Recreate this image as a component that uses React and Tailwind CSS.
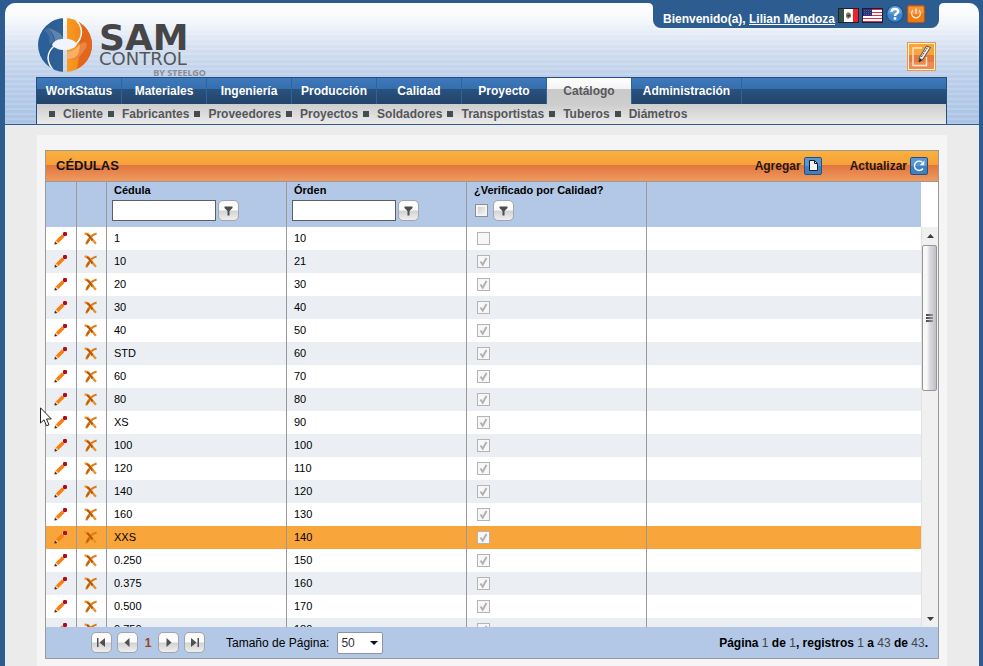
import React from "react";

const TABS = ["WorkStatus", "Materiales", "Ingeniería", "Producción", "Calidad", "Proyecto", "Catálogo", "Administración"];
const SUBMENU = ["Cliente", "Fabricantes", "Proveedores", "Proyectos", "Soldadores", "Transportistas", "Tuberos", "Diámetros"];
const ROWS = [
  ["1", "10"], ["10", "21"], ["20", "30"], ["30", "40"], ["40", "50"], ["STD", "60"],
  ["60", "70"], ["80", "80"], ["XS", "90"], ["100", "100"], ["120", "110"], ["140", "120"],
  ["160", "130"], ["XXS", "140"], ["0.250", "150"], ["0.375", "160"], ["0.500", "170"], ["0.750", "180"],
];
const SELECTED = "XXS";

function Logo() {
  return (
    <svg width="172" height="62" viewBox="0 0 172 62" role="img" aria-label="SAM Control by Steelgo" className="block">
      <defs>
        <clipPath id="disc"><circle cx="27" cy="27" r="27" /></clipPath>
        <linearGradient id="blueHalf" x1="0" x2="1"><stop offset="0" stopColor="#2a5f98" /><stop offset="1" stopColor="#2f5f95" /></linearGradient>
        <linearGradient id="orangeHalf" x1="0" x2="1"><stop offset="0" stopColor="#f99c1c" /><stop offset="0.5" stopColor="#f28a20" /><stop offset="1" stopColor="#d95a18" /></linearGradient>
      </defs>
      <g clipPath="url(#disc)">
        <rect width="25" height="54" fill="url(#blueHalf)" />
        <rect x="29" width="25" height="54" fill="url(#orangeHalf)" />
        <path d="M38 0C46 8 46 16 41 24C41 32 42 42 38 54H54V0Z" fill="#e2661c" />
        <path d="M9 10C18 12 24 16 25 20L17 24C17 18 14 13 9 10Z" fill="#5f84ac" />
        <path d="M9 10C13 13 16 18 16 24L11 26C12 20 11 15 6 13Z" fill="#44719f" />
        <path d="M29 34C35 33 39 30 42 26C43 36 38 42 29 41Z" fill="#f9b066" />
        <path d="M42 26C48 22 50 25 48 30L42 38C38 43 33 42 31 41C39 41 42 35 42 26Z" fill="#ee8443" />
        <path d="M36 0C45 8 46 18 38 26" fill="none" stroke="#ffffff" strokeWidth="1.5" />
        <path d="M16 28C7 36 9 46 17 54" fill="none" stroke="#ffffff" strokeWidth="1.5" />
        <path d="M14 27C17 19 35 19 39 26C36 34 19 34 14 27Z" fill="#f0f5fb" />
      </g>
      <text x="61" y="32" fill="#464548" fontSize="36" fontWeight="700" fontFamily="DejaVu Sans, sans-serif">SAM</text>
      <text x="61" y="47" fill="#55565a" fontSize="18" fontFamily="DejaVu Sans, sans-serif">CONTROL</text>
      <text x="168" y="58" textAnchor="end" fill="#8a8d93" fontSize="9" fontWeight="700" fontFamily="Noto Sans, sans-serif">BY STEELGO</text>
    </svg>
  );
}

const MexicoFlag = () => (
  <svg width="21" height="15" viewBox="0 0 21 15" className="block">
    <rect width="21" height="15" fill="#1c2420" />
    <rect x="1" y="1" width="5" height="13" fill="#34504a" />
    <rect x="6" y="1" width="9" height="13" fill="#ffffff" />
    <rect x="15" y="1" width="5" height="13" fill="#f3202c" />
    <path d="M8 6L10 4L13 6V9L10 11L8 9Z" fill="#8b7a62" />
    <path d="M9 7H11V5L12 8L10 9Z" fill="#33302a" />
  </svg>
);

const UsFlag = () => (
  <svg width="21" height="15" viewBox="0 0 21 15" className="block">
    <rect width="21" height="15" fill="#1b1c3a" />
    <rect x="1" y="1" width="19" height="13" fill="#ffffff" />
    {[1, 4, 7, 10, 13].map((y) => <rect key={y} x="1" y={y} width="19" height="1" fill="#e0303c" />)}
    <rect x="1" y="1" width="9" height="7" fill="#2b2f78" />
    {[2, 4, 6].map((y) => <path key={y} d={`M2 ${y}.5H9`} stroke="#5a5f9d" strokeWidth="1" strokeDasharray="1 1" />)}
  </svg>
);

const HelpIcon = () => (
  <svg width="18" height="18" viewBox="0 0 18 18" className="block">
    <circle cx="9" cy="9" r="9" fill="#1f4f86" />
    <circle cx="9" cy="9" r="7.8" fill="#3f84c8" />
    <path d="M2 8A7 7 0 0 1 16 8Q9 11 2 8Z" fill="#5f9dd8" />
    <path d="M5.7 6.8C5.7 3.2 12.2 3.2 12.2 6.3C12.2 8.6 9 8.3 9 11" fill="none" stroke="#ffffff" strokeWidth="2.5" />
    <rect x="7.7" y="12.2" width="2.6" height="2.5" fill="#ffffff" />
  </svg>
);

const PowerIcon = () => (
  <svg width="18" height="18" viewBox="0 0 18 18" className="block">
    <rect x="0.5" y="0.5" width="17" height="17" rx="2" fill="#f07a12" stroke="#b8560c" />
    <path d="M1.5 2H16.5V8Q9 11 1.5 8Z" fill="#f7923a" />
    <path d="M6 5.2A4.4 4.4 0 1 0 12 5.2" fill="none" stroke="#ffe9d0" strokeWidth="1.2" />
    <path d="M9 3.5V9" stroke="#ffffff" strokeWidth="1.2" />
  </svg>
);

const NotesIcon = () => (
  <svg width="29" height="29" viewBox="0 0 29 29" className="block">
    <rect width="29" height="29" fill="#f0953c" />
    <rect x="1.5" y="1.5" width="26" height="26" fill="#f7a43a" stroke="#fff3e0" />
    <rect x="2" y="13" width="25" height="14" fill="#e27b43" />
    <rect x="2" y="20" width="25" height="7" fill="#ea8d50" />
    <path d="M15 6H6V23.5H19.5V15" fill="none" stroke="#fbe6cf" strokeWidth="1.4" />
    <path d="M12 20L12.5 15.5L19.5 4L23.5 5.5L15.5 17.8Z" fill="#e8e8e8" stroke="#333333" strokeWidth="0.8" />
    <path d="M12 20L12.8 16L15.2 18Z" fill="#222222" />
    <path d="M14.3 15L20.8 5" stroke="#555555" strokeWidth="1" strokeDasharray="2 1" />
  </svg>
);

const NewIcon = () => (
  <svg width="18" height="18" viewBox="0 0 18 18" className="block">
    <rect x="0.5" y="0.5" width="17" height="17" rx="1.5" fill="#4080bf" stroke="#234f82" />
    <rect x="1" y="1" width="16" height="8" fill="#5a96d0" />
    <path d="M5.5 3.5H10.5L13.5 6.5V13.5H5.5Z" fill="#f2f5f8" stroke="#15202c" />
    <path d="M10.5 3.5V6.5H13.5" fill="none" stroke="#15202c" />
  </svg>
);

const RefreshIcon = () => (
  <svg width="18" height="18" viewBox="0 0 18 18" className="block">
    <rect x="0.5" y="0.5" width="17" height="17" rx="1.5" fill="#4080bf" stroke="#234f82" />
    <rect x="1" y="1" width="16" height="8" fill="#5a96d0" />
    <path d="M12.2 5.2A4.7 4.7 0 1 0 13 11.5" fill="none" stroke="#ffffff" strokeWidth="1.3" />
    <path d="M14.3 3.6V8.2H9.8Z" fill="#ffffff" />
  </svg>
);

const PencilIcon = () => (
  <svg width="13" height="13" viewBox="0 0 13 13" className="block">
    <path d="M2.6 10.2L9.4 3.4" stroke="#fb7d0c" strokeWidth="3.6" />
    <path d="M0.4 12.6L1 9.6L3.4 12Z" fill="#2b2622" />
    <path d="M1.2 9.6L2.2 8.6L4.4 10.8L3.4 11.8Z" fill="#f9c58c" />
    <path d="M8.4 2L11 4.6" stroke="#dcd6e6" strokeWidth="1.3" />
    <rect x="9" y="0" width="4" height="4" rx="1.2" fill="#b00c12" />
  </svg>
);

const DeleteIcon = () => (
  <svg width="13" height="13" viewBox="0 0 13 13" className="block">
    <path d="M12.6 1.4C8.6 2.4 4.2 6.2 2.2 12.4" fill="none" stroke="#e07a14" strokeWidth="2.1" />
    <path d="M0.6 1.8C3.4 1.2 5.2 3 7 5.6C8.6 8 10 9.8 12 11.8" fill="none" stroke="#ee8f26" strokeWidth="2.3" />
    <path d="M3 2.2C5 3.2 6.4 5.8 8.4 8.4" fill="none" stroke="#b85404" strokeWidth="2" />
    <path d="M5.4 7.4L3 11" stroke="#c25f08" strokeWidth="2" />
  </svg>
);

const Check = () => (
  <svg width="13" height="13" viewBox="0 0 13 13" className="pointer-events-none absolute left-0 top-0">
    <path d="M3.5 6.5L5.7 9.8L9.5 3" fill="none" stroke="#b0b0b0" strokeWidth="1.9" />
  </svg>
);

const ICON_BUTTON =
  "flex size-[21px] items-center justify-center rounded-[5px] border border-[#a2a6ac] bg-linear-to-b from-[#fbfbfb] from-45% via-[#d4d4d4] via-55% to-[#efefef]";

function FilterButton({ label }) {
  return (
    <button type="button" aria-label={label} className={ICON_BUTTON}>
      <svg width="9" height="10" viewBox="0 0 9 10">
        <path d="M0.5 0.5H8.5V2L5.5 5V9.5H3.5V5L0.5 2Z" fill="#4c4c4c" />
      </svg>
    </button>
  );
}

function PagerButton({ label, d }) {
  return (
    <button type="button" aria-label={label} className={ICON_BUTTON}>
      <svg width="9" height="9" viewBox="0 0 9 9"><path d={d} fill="#505050" /></svg>
    </button>
  );
}

function TextFilter({ label }) {
  return (
    <div className="flex gap-[2px] pl-[5px]">
      <input type="text" aria-label={label} className="h-[21px] w-[104px] border border-[#5c5f63] bg-white px-1 text-[11px] outline-none" />
      <FilterButton label={`Filtrar ${label}`} />
    </div>
  );
}

function HeaderCell({ title, children }) {
  return (
    <th scope="col" className="h-[45px] border-r border-[#999999] bg-[#b2c8e6] p-0 text-left align-top font-bold">
      <div className="h-[18px] pl-[7px] leading-[17px] whitespace-nowrap">{title}</div>
      {children}
    </th>
  );
}

function ScrollBar() {
  return (
    <div className="flex min-h-0 flex-1 flex-col border-l border-[#e2e2e2] bg-[#f0f0f0]">
      <button type="button" aria-label="Subir" className="flex h-[18px] items-center justify-center">
        <svg width="7" height="4" viewBox="0 0 7 4"><path d="M3.5 0L7 4H0Z" fill="#3c3c3c" /></svg>
      </button>
      <div className="mr-px flex h-[146px] flex-col items-center justify-center gap-px rounded-[2px] border border-[#979797] bg-linear-to-r from-[#f8f8f8] from-30% via-[#dcdce0] via-50% to-[#bfbfc8]">
        <i className="h-[2px] w-[7px] bg-linear-to-r from-[#444444] to-[#999999]" />
        <i className="h-[2px] w-[7px] bg-linear-to-r from-[#444444] to-[#999999]" />
        <i className="h-[2px] w-[7px] bg-linear-to-r from-[#444444] to-[#999999]" />
      </div>
      <button type="button" aria-label="Bajar" className="mt-auto flex h-[17px] items-center justify-center">
        <svg width="7" height="4" viewBox="0 0 7 4"><path d="M3.5 4L7 0H0Z" fill="#3c3c3c" /></svg>
      </button>
    </div>
  );
}

function Grid() {
  return (
    <div className="flex h-[445px] overflow-hidden">
      <div className="min-w-0 flex-1 overflow-hidden">
        <table className="w-full table-fixed border-separate border-spacing-0 text-[11px] text-black">
          <colgroup>
            <col className="w-[31px]" />
            <col className="w-[30px]" />
            <col className="w-[180px]" />
            <col className="w-[180px]" />
            <col className="w-[180px]" />
            <col />
          </colgroup>
          <thead>
            <tr>
              <td className="border-r border-[#999999] bg-[#b2c8e6]" />
              <td className="border-r border-[#999999] bg-[#b2c8e6]" />
              <HeaderCell title="Cédula"><TextFilter label="Cédula" /></HeaderCell>
              <HeaderCell title="Órden"><TextFilter label="Órden" /></HeaderCell>
              <HeaderCell title="¿Verificado por Calidad?">
                <div className="flex items-center gap-[5px] pl-2">
                  <input type="checkbox" aria-label="Verificado por Calidad" className="size-[13px] appearance-none border border-[#8e8f8f] bg-linear-to-br from-[#c4c8cc] to-[#fafafa] shadow-[inset_0_0_0_2px_#f4f4f4]" />
                  <FilterButton label="Filtrar Verificado por Calidad" />
                </div>
              </HeaderCell>
              <td className="bg-[#b2c8e6]" />
            </tr>
          </thead>
          <tbody>
            {ROWS.map(([name, order], i) => (
              <tr key={name} className={name === SELECTED ? "bg-[#f8a53c]" : i % 2 ? "bg-[#ebeff4]" : "bg-white"}>
                <td className="h-[23px] border-r border-[#999999] p-0">
                  <button type="button" aria-label={`Editar ${name}`} className="ml-2 block"><PencilIcon /></button>
                </td>
                <td className="border-r border-[#999999] p-0">
                  <button type="button" aria-label={`Borrar ${name}`} className="ml-[7px] block"><DeleteIcon /></button>
                </td>
                <td className="border-r border-[#999999] p-0 pb-px pl-[7px] leading-4">{name}</td>
                <td className="border-r border-[#999999] p-0 pb-px pl-[7px] leading-4">{order}</td>
                <td className="border-r border-[#999999] p-0 pl-[10px]">
                  <span className="relative block size-[13px]">
                    <input type="checkbox" disabled checked={i > 0} readOnly aria-label={`Verificado ${name}`} className="block size-[13px] appearance-none border border-[#b4b4b4] bg-[#f7f7f7]" />
                    {i > 0 && <Check />}
                  </span>
                </td>
                <td className="p-0" />
              </tr>
            ))}
          </tbody>
        </table>
      </div>
      <div className="flex w-[17px] flex-col bg-white pt-[45px]"><ScrollBar /></div>
    </div>
  );
}

export default function App() {
  return (
    <div className="relative flex min-h-screen flex-col bg-[#2c5c90] pt-[3px] pr-1 pl-[5px] font-['Liberation_Sans',Arial,sans-serif]">
      <header className="rounded-t-[10px] border-b border-[#2c5c90] bg-[repeating-linear-gradient(180deg,rgba(255,255,255,0.14)_0px,rgba(255,255,255,0.14)_2px,transparent_2px,transparent_5px),linear-gradient(180deg,#ffffff_0%,#f4f7fb_15%,#d3dff0_38%,#bccfea_60%,#a9c3e5_100%)]">
        <div className="flex h-[74px] justify-between pl-[33px]">
          <a href="#inicio" className="pt-[15px]"><Logo /></a>
          <div className="flex flex-col items-end pr-[35px]">
            <div className="flex">
              <svg width="5" height="5" viewBox="0 0 5 5"><path d="M0 0Q5 0 5 5V0Z" fill="#2c5c90" /></svg>
              <div className="flex h-[25px] items-start rounded-b-[8px] bg-[#2c5c90] pr-[14px] pl-[10px] text-[12px] font-bold text-white">
                <span className="pt-2 leading-4 whitespace-nowrap">Bienvenido(a), <a href="#perfil" className="underline">Lilian Mendoza</a></span>
                <button type="button" aria-label="Español" className="mt-[5px] ml-[3px]"><MexicoFlag /></button>
                <button type="button" aria-label="English" className="mt-[5px] ml-[3px]"><UsFlag /></button>
                <button type="button" aria-label="Ayuda" className="mt-[2px] ml-[3px]"><HelpIcon /></button>
                <button type="button" aria-label="Salir" className="mt-[2px] ml-[3px]"><PowerIcon /></button>
              </div>
              <svg width="5" height="5" viewBox="0 0 5 5"><path d="M5 0Q0 0 0 5V0Z" fill="#2c5c90" /></svg>
            </div>
            <button type="button" aria-label="Notas" className="mt-[14px] mr-2"><NotesIcon /></button>
          </div>
        </div>
        <div className="mr-8 ml-[31px] border-x border-t border-[#24507f]">
          <nav className="h-[26px]">
            <ul className="flex h-full w-full bg-[linear-gradient(180deg,#3d79bc_0px,#366eac_11px,#28527f_11px,#23446a_26px)]">
              {TABS.map((tab) => (
                <li
                  key={tab}
                  className={
                    tab === "Catálogo"
                      ? "w-[85px] border-r border-[#2f639e] bg-[linear-gradient(180deg,#ffffff_0px,#f4f4f4_11px,#cacaca_11px,#cdcdcd_26px)] text-[#58595b]"
                      : tab === "Administración"
                        ? "w-[110px] border-r border-[#2f639e] text-white"
                        : "w-[85px] border-r border-[#2f639e] text-white"
                  }
                >
                  <a href={`#${tab}`} className="flex h-full items-center justify-center text-[12px] font-bold">{tab}</a>
                </li>
              ))}
            </ul>
          </nav>
          <nav className="bg-linear-to-b from-[#cdcdcd] to-[#ebebeb]">
            <ul className="flex h-5 items-center gap-[5px] pl-3">
              {SUBMENU.map((item) => (
                <li key={item} className="flex items-center gap-2">
                  <i className="size-[6px] bg-[#454c4f]" />
                  <a href={`#${item}`} className="text-[12px] leading-4 font-bold text-[#54565a]">{item}</a>
                </li>
              ))}
            </ul>
          </nav>
        </div>
      </header>
      <main className="flex flex-1 flex-col bg-[#ebebeb] pt-[10px] pr-8 pl-8">
        <div className="flex-1 bg-[#f5f5f5] px-2 pt-[15px] pb-[7px]">
          <section className="border border-[#999999] bg-white">
            <div className="flex h-[31px] items-center border-b border-[#999999] bg-[linear-gradient(180deg,#fbb03b_0px,#f5a03c_14px,#e0743e_14px,#f09c5e_30px)] pr-[10px] pl-[10px]">
              <h1 className="flex-1 text-[13px] font-bold text-[#15110c]">CÉDULAS</h1>
              <div className="flex gap-7 text-[12px] font-bold text-[#2a1608]">
                <a href="#agregar" className="flex items-center gap-[3px]">Agregar<NewIcon /></a>
                <a href="#actualizar" className="flex items-center gap-[3px]">Actualizar<RefreshIcon /></a>
              </div>
            </div>
            <Grid />
            <footer className="flex h-[31px] items-center bg-[#b2c8e6] pr-[10px] pl-[45px] text-[12px] text-black">
              <div className="flex items-center gap-[5px]">
                <PagerButton label="Primera página" d="M0 0H1.5V9H0ZM8 0V9L2.5 4.5Z" />
                <PagerButton label="Página anterior" d="M6.5 0V9L1.5 4.5Z" />
                <span className="w-[10px] text-center font-bold text-[#a0401c]">1</span>
                <PagerButton label="Página siguiente" d="M2.5 0V9L7.5 4.5Z" />
                <PagerButton label="Última página" d="M7.5 0H9V9H7.5ZM1 0V9L6.5 4.5Z" />
              </div>
              <label htmlFor="page-size" className="ml-[21px]">Tamaño de Página:</label>
              <span className="relative ml-2">
                <select id="page-size" defaultValue="50" className="block h-[22px] w-[46px] appearance-none rounded-[2px] border border-[#8f959c] bg-white pl-[3px] text-[12px] text-[#333333]">
                  <option>10</option>
                  <option>20</option>
                  <option>50</option>
                </select>
                <svg width="8" height="4" viewBox="0 0 8 4" className="pointer-events-none absolute top-[9px] right-[5px]"><path d="M0 0H8L4 4Z" fill="#111111" /></svg>
              </span>
              <p className="ml-auto font-bold [&>span]:font-normal [&>span]:text-[#444444]">
                Página <span>1</span> de <span>1</span>, registros <span>1</span> a <span>43</span> de <span>43</span>.
              </p>
            </footer>
          </section>
        </div>
      </main>
      <svg width="13" height="21" viewBox="0 0 13 21" className="pointer-events-none absolute top-[407px] left-[40px]">
        <path d="M0.5 0.8V16L4 12.8L6.5 18.8L9 17.8L6.5 12H11.3Z" fill="#ffffff" stroke="#222222" />
      </svg>
    </div>
  );
}
